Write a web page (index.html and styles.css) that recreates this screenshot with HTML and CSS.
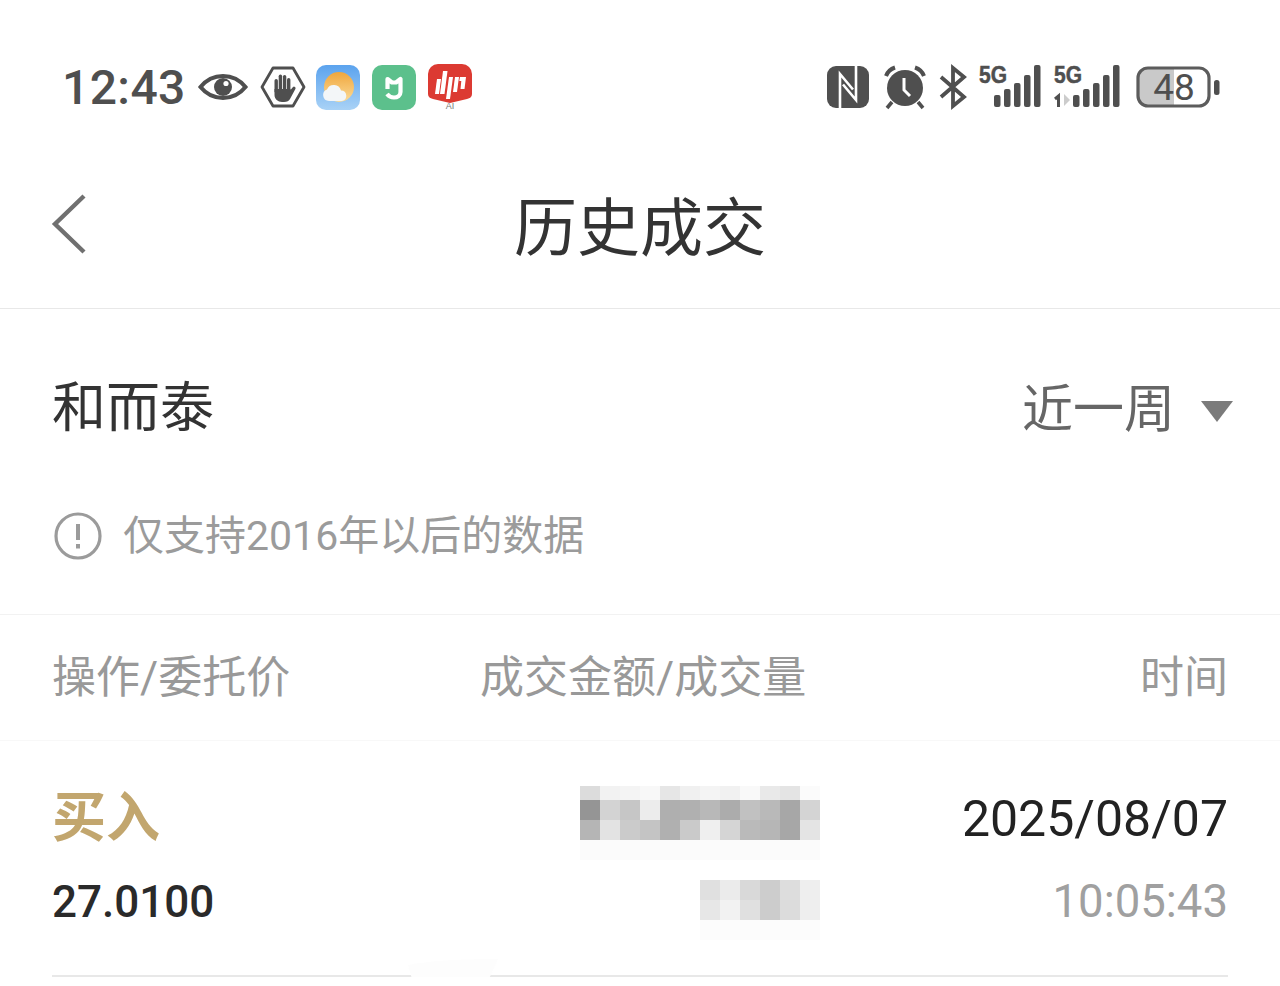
FILE: index.html
```html
<!DOCTYPE html>
<html lang="zh-CN">
<head>
  <meta charset="UTF-8">
  <title>历史成交</title>
  <link rel="stylesheet" href="styles.css">
</head>
<body>
  <div class="status-bar">
    <div class="status-left">
      <span class="clock">12:43</span>
      <svg class="ic-eye" viewBox="0 0 50 26"><path d="M2.5 13C9 5 16 2 25 2s16 3 22.500 11C41 21 34 24 25 24S9 21 2.500 13z" fill="none" stroke="#4f4f4f" stroke-width="4"/><circle cx="25" cy="13" r="9" fill="#4f4f4f"/><circle cx="28" cy="9.500" r="2.600" fill="#fff"/></svg>
      <svg class="ic-hex" viewBox="0 0 46 42"><path d="M13 2h20l11 19-11 19H13L2 21z" fill="none" stroke="#4f4f4f" stroke-width="2.800" stroke-linejoin="round"/><g fill="#4f4f4f"><rect x="14.500" y="13" width="3.400" height="14" rx="1.700"/><rect x="18.700" y="8.500" width="3.400" height="16" rx="1.700"/><rect x="22.900" y="9" width="3.400" height="16" rx="1.700"/><rect x="27" y="12" width="3.400" height="14" rx="1.700"/><path d="M14.500 23h16v1l2.500-3a1.600 1.600 0 0 1 2.500 1.800L30 33c-1 2-3 3-6 3h-2c-4 0-7.500-3-7.500-7z"/></g></svg>
      <svg class="ic-app" viewBox="0 0 44 45">
        <defs>
          <linearGradient id="sky" x1="0" y1="0" x2="0" y2="1"><stop offset="0" stop-color="#5ba3ee"/><stop offset="1" stop-color="#a9d2f6"/></linearGradient>
          <linearGradient id="sun" x1="0" y1="0" x2="0" y2="1"><stop offset="0" stop-color="#f0a63c"/><stop offset="1" stop-color="#fbdc9a"/></linearGradient>
        </defs>
        <rect width="44" height="45" rx="10" fill="url(#sky)"/>
        <circle cx="23" cy="22" r="15" fill="url(#sun)"/>
        <path d="M13 36a6 6 0 0 1-2-11.600A7.500 7.500 0 0 1 25 25.500a5.300 5.300 0 0 1 1 10.500z" fill="#f3f6f8"/>
      </svg>
      <svg class="ic-app" viewBox="0 0 44 45">
        <rect width="44" height="45" rx="10" fill="#5cc08c"/>
        <path d="M15.500 24V14l4.500 3.500h4l4.500-3.500v13c0 3.500-3 5.500-6.500 5.500-3 0-5-1-7-3.500" fill="none" stroke="#fff" stroke-width="4.200" stroke-linejoin="round"/>
      </svg>
      <svg class="ic-app ic-red" viewBox="0 0 44 45">
        <path d="M10 0h24a10 10 0 0 1 10 10v20c0 3-2 4-5 5l-17 4-17-4c-3-1-5-2-5-5V10A10 10 0 0 1 10 0z" fill="#dc3a32"/>
        <g fill="#fff"><path d="M9 15h4l-2 15H7z"/><path d="M15 7h4.500l-3 23H12z"/><path d="M21 13h4l-3 22h-4z"/><path d="M27 13h4l-2 15h-4z"/><path d="M32 13h6l-1.500 12h-4l.8-8h-2z"/></g>
        <text x="22" y="45" class="ai-label">AI</text>
      </svg>
    </div>
    <div class="status-right">
      <svg class="ic-nfc" viewBox="0 0 42 42">
        <rect width="42" height="42" rx="9" fill="#4f4f4f"/>
        <path d="M13 42V8l13 15.500" fill="none" stroke="#fff" stroke-width="2.600"/>
        <path d="M29 0v34L16 18.500" fill="none" stroke="#fff" stroke-width="2.600"/>
      </svg>
      <svg class="ic-alarm" viewBox="0 0 49 44">
        <circle cx="26" cy="23" r="18" fill="#4f4f4f"/>
        <path d="M7 11c1.500-4 4.500-7 9-8.500M45 11c-1.500-4-4.500-7-9-8.500" fill="none" stroke="#4f4f4f" stroke-width="4"/>
        <path d="M13 37l-5 6M39 37l5 6" stroke="#4f4f4f" stroke-width="3.600"/>
        <path d="M25 13v12l6 6" fill="none" stroke="#fff" stroke-width="3"/>
      </svg>
      <svg class="ic-bt" viewBox="0 0 30 42"><path d="M3 11l23 20-11 9V2l11 9L3 31" fill="none" stroke="#4f4f4f" stroke-width="3.800"/></svg>
      <svg class="ic-sig" viewBox="0 0 64 42">
        <text x="1" y="17" class="net-label" textLength="28" lengthAdjust="spacingAndGlyphs">5G</text>
        <g fill="#4f4f4f"><rect x="16" y="29" width="6.500" height="12" rx="2"/><rect x="26" y="23" width="6.500" height="18" rx="2"/><rect x="36" y="17" width="6.500" height="24" rx="2"/><rect x="46" y="9" width="6.500" height="32" rx="2"/><rect x="56" y="-1" width="6.500" height="42" rx="2"/></g>
      </svg>
      <svg class="ic-sig2" viewBox="0 0 69 42">
        <text x="2" y="17" class="net-label" textLength="28" lengthAdjust="spacingAndGlyphs">5G</text>
        <path d="M3 33l3.500-3v11" fill="none" stroke="#4f4f4f" stroke-width="3"/>
        <path d="M12 28l6 6-6 6z" fill="#ccc"/>
        <g fill="#4f4f4f"><rect x="21" y="29" width="6.500" height="12" rx="2"/><rect x="31" y="23" width="6.500" height="18" rx="2"/><rect x="41" y="17" width="6.500" height="24" rx="2"/><rect x="51" y="9" width="6.500" height="32" rx="2"/><rect x="61" y="-1" width="6.500" height="42" rx="2"/></g>
      </svg>
      <svg class="ic-batt" viewBox="0 0 89 42">
        <rect x="8" y="3" width="69" height="37" rx="10" fill="#fff"/>
        <path d="M16 3h27v37H16a8 8 0 0 1-8-8V11a8 8 0 0 1 8-8z" fill="#c9c9c9"/>
        <rect x="7" y="2" width="71" height="38" rx="10" fill="none" stroke="#5c5c5c" stroke-width="3.200"/>
        <rect x="83" y="14" width="5.500" height="15" rx="2.500" fill="#4f4f4f"/>
        <text x="43" y="34" class="batt-label">48</text>
      </svg>
    </div>
  </div>

  <div class="nav-bar">
    <svg class="back" viewBox="0 0 36 62"><path d="M33 3L4 31l29 28" fill="none" stroke="#707070" stroke-width="4.400"/></svg>
    <h1>历史成交</h1>
  </div>

  <div class="stock-row">
    <span class="stock-name">和而泰</span>
    <div class="period">
      <span>近一周</span>
      <i class="caret"></i>
    </div>
  </div>

  <div class="notice">
    <svg class="notice-ic" viewBox="0 0 48 48"><circle cx="24" cy="24" r="22" fill="none" stroke="#9b9b9b" stroke-width="3.200"/><rect x="22" y="12" width="4" height="16" fill="#9b9b9b"/><rect x="22" y="32" width="4" height="4.500" fill="#9b9b9b"/></svg>
    <span class="notice-text">仅支持2016年以后的数据</span>
  </div>

  <div class="table-head">
    <span>操作/委托价</span>
    <span>成交金额/成交量</span>
    <span>时间</span>
  </div>

  <div class="deal-row">
    <div class="deal-col">
      <span class="deal-type">买入</span>
      <span class="deal-price">27.0100</span>
    </div>
    <svg class="mosaic" viewBox="0 0 280 160">
      <g>
        <rect x="0" y="0" width="20" height="14" fill="#dcdcdc"/><rect x="20" y="0" width="20" height="14" fill="#f2f2f2"/><rect x="40" y="0" width="20" height="14" fill="#f4f4f4"/><rect x="60" y="0" width="20" height="14" fill="#f8f8f8"/><rect x="80" y="0" width="20" height="14" fill="#e6e6e6"/><rect x="100" y="0" width="20" height="14" fill="#f0f0f0"/><rect x="120" y="0" width="20" height="14" fill="#f4f4f4"/><rect x="140" y="0" width="20" height="14" fill="#f1f1f1"/><rect x="160" y="0" width="20" height="14" fill="#f9f9f9"/><rect x="180" y="0" width="20" height="14" fill="#e9e9e9"/><rect x="200" y="0" width="20" height="14" fill="#e4e4e4"/><rect x="220" y="0" width="20" height="14" fill="#fbfbfb"/>
        <rect x="0" y="14" width="20" height="20" fill="#959595"/><rect x="20" y="14" width="20" height="20" fill="#d3d3d3"/><rect x="40" y="14" width="20" height="20" fill="#c6c6c6"/><rect x="60" y="14" width="20" height="20" fill="#ececec"/><rect x="80" y="14" width="20" height="20" fill="#afafaf"/><rect x="100" y="14" width="20" height="20" fill="#b0b0b0"/><rect x="120" y="14" width="20" height="20" fill="#b8b8b8"/><rect x="140" y="14" width="20" height="20" fill="#acacac"/><rect x="160" y="14" width="20" height="20" fill="#c1c1c1"/><rect x="180" y="14" width="20" height="20" fill="#b9b9b9"/><rect x="200" y="14" width="20" height="20" fill="#a7a7a7"/><rect x="220" y="14" width="20" height="20" fill="#d4d4d4"/>
        <rect x="0" y="34" width="20" height="20" fill="#b5b5b5"/><rect x="20" y="34" width="20" height="20" fill="#e3e3e3"/><rect x="40" y="34" width="20" height="20" fill="#cbcbcb"/><rect x="60" y="34" width="20" height="20" fill="#c4c4c4"/><rect x="80" y="34" width="20" height="20" fill="#b0b0b0"/><rect x="100" y="34" width="20" height="20" fill="#cacaca"/><rect x="120" y="34" width="20" height="20" fill="#efefef"/><rect x="140" y="34" width="20" height="20" fill="#d5d5d5"/><rect x="160" y="34" width="20" height="20" fill="#bababa"/><rect x="180" y="34" width="20" height="20" fill="#b6b6b6"/><rect x="200" y="34" width="20" height="20" fill="#a7a7a7"/><rect x="220" y="34" width="20" height="20" fill="#e4e4e4"/>
        <rect x="0" y="54" width="240" height="20" fill="#fbfbfb"/>
        <rect x="120" y="94" width="20" height="20" fill="#e0e0e0"/><rect x="140" y="94" width="20" height="20" fill="#ebebeb"/><rect x="160" y="94" width="20" height="20" fill="#d9d9d9"/><rect x="180" y="94" width="20" height="20" fill="#cdcdcd"/><rect x="200" y="94" width="20" height="20" fill="#dddddd"/><rect x="220" y="94" width="20" height="20" fill="#eeeeee"/>
        <rect x="120" y="114" width="20" height="20" fill="#e7e7e7"/><rect x="140" y="114" width="20" height="20" fill="#f2f2f2"/><rect x="160" y="114" width="20" height="20" fill="#e0e0e0"/><rect x="180" y="114" width="20" height="20" fill="#cccccc"/><rect x="200" y="114" width="20" height="20" fill="#dcdcdc"/><rect x="220" y="114" width="20" height="20" fill="#eeeeee"/>
        <rect x="120" y="134" width="120" height="20" fill="#fcfcfc"/>
      </g>
    </svg>
    <div class="deal-col deal-time">
      <span class="deal-date">2025/08/07</span>
      <span class="deal-clock">10:05:43</span>
    </div>
    <svg class="smudge" viewBox="0 0 90 30"><path d="M0 6C20 2 50 0 90 0L80 22C50 32 20 28 4 20z" fill="#fdfdfd"/></svg>
  </div>
</body>
</html>
```

FILE: styles.css
```css
* { box-sizing: border-box; }
body { margin: 0; background: #fff; font-family: Roboto, "Noto Sans CJK SC", sans-serif; overflow: hidden; }
svg { display: block; flex: none; overflow: visible; }

.status-bar { height: 144px; padding: 30px 60px 0 62px; display: flex; justify-content: space-between; align-items: center; }
.status-left { display: flex; align-items: center; gap: 12px; }
.status-right { display: flex; align-items: center; gap: 10px; }
.clock { font-size: 48px; font-weight: 500; color: #4f4f4f; letter-spacing: 0.4px; }
.ic-eye { width: 50px; height: 26px; }
.ic-hex { width: 46px; height: 42px; margin-right: -2px; }
.ic-app { width: 44px; height: 45px; }
.ic-red { margin-top: -2px; }
.ic-nfc { width: 42px; height: 42px; }
.ic-alarm { width: 49px; height: 44px; }
.ic-bt { width: 30px; height: 42px; }
.ic-sig { width: 64px; height: 42px; }
.ic-sig2 { width: 69px; height: 42px; }
.ic-batt { width: 89px; height: 42px; }
.net-label { font-family: "Liberation Sans", sans-serif; font-size: 24px; font-weight: 700; fill: #4f4f4f; stroke: #4f4f4f; stroke-width: 0.5px; }
.batt-label { font-size: 37px; fill: #4f4f4f; text-anchor: middle; }
.ai-label { font-family: "Liberation Sans", sans-serif; font-size: 9px; fill: #777; text-anchor: middle; }

.nav-bar { height: 165px; padding: 0 52px; position: relative; display: flex; align-items: center; justify-content: center; border-bottom: 1px solid #e8e8e8; }
.nav-bar h1 { margin: 0; padding-bottom: 8px; font-size: 63px; font-weight: 400; color: #333; }
.back { width: 36px; height: 62px; position: absolute; left: 51px; top: 49px; }

.stock-row { height: 188px; padding: 0 47px 0 52px; display: flex; justify-content: space-between; align-items: center; }
.stock-name { font-size: 54px; color: #333; }
.period { display: flex; align-items: center; gap: 26px; padding-top: 4px; font-size: 51px; color: #666; }
.caret { width: 0; height: 0; margin-top: 12px; border-left: 16px solid transparent; border-right: 16px solid transparent; border-top: 21px solid #7b7b7b; }

.notice { height: 117px; padding: 0 52px 39px 54px; display: flex; align-items: center; gap: 21px; font-size: 41px; color: #9b9b9b; }
.notice-ic { width: 48px; height: 48px; }
.notice-text { margin-top: -8px; }

.table-head { height: 127px; padding: 0 52px 8px; display: grid; grid-template-columns: 428px 1fr auto; align-items: center; font-size: 44px; color: #999; border-top: 1px solid #f2f2f2; border-bottom: 1px solid #f8f8f8; }

.deal-row { position: relative; margin: 0 52px; height: 236px; display: grid; grid-template-columns: 528px 240px 1fr; border-bottom: 2px solid #e8e8e8; }
.deal-col { display: flex; flex-direction: column; padding-top: 43px; }
.deal-time { align-items: flex-end; }
.deal-type { height: 70px; line-height: 70px; font-size: 54px; font-weight: 700; color: #c2a66e; }
.deal-price { margin-top: 13px; height: 70px; line-height: 70px; font-size: 44px; font-weight: 500; color: #2a2a2a; }
.deal-date { height: 70px; line-height: 70px; font-size: 50px; color: #222; }
.deal-clock { margin-top: 13px; height: 70px; line-height: 70px; font-size: 45.500px; color: #a0a0a0; }
.mosaic { width: 280px; height: 160px; margin-top: 45px; }
.smudge { position: absolute; left: 356px; top: 218px; width: 90px; height: 30px; }
```
